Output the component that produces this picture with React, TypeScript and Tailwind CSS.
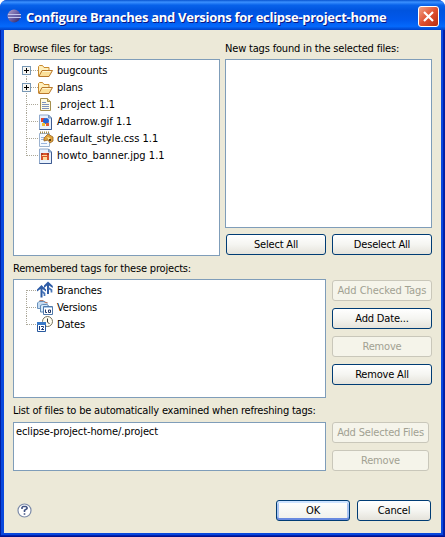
import type { ReactNode } from "react";

function Folder() {
  return (
    <svg width="16" height="16" viewBox="0 0 16 16">
      <path d="M1.500 13V3.500l1-1h3l1.500 2h5V8" fill="#fff0bd" stroke="#c98a2e" />
      <path d="M1.800 13.500l3.200-6h10.500l-3.500 6z" fill="#fbe09a" stroke="#b9782c" />
      <path d="M5.500 8.500h8.500" stroke="#fff6d2" />
    </svg>
  );
}

function TextFile() {
  return (
    <svg width="16" height="16" viewBox="0 0 16 16">
      <path d="M3.500 1.500h7l3 3v9h-10z" fill="#fffbe3" stroke="#a5904f" />
      <path d="M10.500 1.500v3h3" fill="#e3cf8d" stroke="#a5904f" />
      <path d="M5 5.500h4M5 7.500h7M5 9.500h7M5 11.500h7" stroke="#7d93bd" />
    </svg>
  );
}

function ImageFile({ photo }: { photo?: boolean }) {
  return (
    <svg width="16" height="16" viewBox="0 0 16 16">
      <path d="M2.500 1h9l3 3v11.500h-12z" fill="#e8f1fc" stroke="#8fa9cc" />
      <path d="M14.500 4v11.500h-12" fill="none" stroke="#3d5a91" />
      <path d="M11.500 1v3h3z" fill="#a9c0de" stroke="#7795bd" />
      {photo ? (
        <>
          <path d="M4 5h8v7H4z" fill="#d9542b" />
          <path d="M5 7h5v1H5zM6 9h4v3H6z" fill="#ffdc9b" />
          <path d="M4 5h2v2H4zM10 5h2v2h-2z" fill="#a83a25" />
        </>
      ) : (
        <>
          <path d="M4 4h4v4H4z" fill="#e0452e" />
          <circle cx="9" cy="7" r="3" fill="#2464d8" />
          <path d="M5 9h3v3H5z" fill="#f0bd32" />
          <path d="M9 9h3v3H9z" fill="#de5a3a" />
        </>
      )}
    </svg>
  );
}

function CssFile() {
  return (
    <svg width="17" height="16" viewBox="0 0 17 16">
      <path d="M2.500 2.500h10v13h-10z" fill="#f5faff" stroke="#9bb2cf" />
      <path d="M3 1.500h1M5 1.500h1M7 1.500h1M9 1.500h1M11 1.500h1" stroke="#a18c4b" strokeWidth="2" />
      <path d="M4 6.500h3M4 8.500h3M4 12.500h6" stroke="#9ab5df" />
      <path d="M7 7l4-4 5 3v4l-3 2-2-3-4 1z" fill="#dfa23a" stroke="#966323" strokeWidth=".8" />
      <path d="M10 6l3 1-1 2z" fill="#fff0a5" />
      <path d="M12 8h2v2h-2z" fill="#604015" />
    </svg>
  );
}

function Branches() {
  return (
    <svg width="16" height="16" viewBox="0 0 16 16" className="overflow-visible">
      <g fill="#2e5ca6">
        <path d="M4.500 2L9 6.500v2L5.500 6v8.500h-2V6L0 8.500v-2z" />
        <path d="M11 -1.500L15.800 3v2L12 2.500V11h-2V2.500L7 5V2.500z" />
      </g>
      <path d="M5 8.500l2.500 2V13M11.500 5l3 2v2.500" fill="none" stroke="#4775b8" strokeWidth="1.700" />
    </svg>
  );
}

function Versions() {
  return (
    <svg width="16" height="16" viewBox="0 0 16 16">
      <path d="M.5 8.500V3l1.500-1.500h6l2 2v5H.5z" fill="#c6dcf2" stroke="#6a91bb" />
      <path d="M2.500 .5h4M7.500 2.500h3" stroke="#bd806a" />
      <path d="M3.500 12V5.500l2-1h4l2 1V12z" fill="#d6eafa" stroke="#628ab5" />
      <path d="M6.500 6.500h9v8h-9z" fill="#fff" stroke="#4f79aa" />
      <path d="M7 7.500h8" stroke="#a9c9e9" />
      <path d="M8.500 9.500v3H10M11.500 10h2v2.500h-2z" fill="none" stroke="#243969" />
    </svg>
  );
}

function Dates() {
  return (
    <svg width="16" height="16" viewBox="0 0 16 16" className="overflow-visible">
      <circle cx="10.500" cy="4.500" r="5" fill="#fffdf0" stroke="#77735f" />
      <path d="M10.500 1.500v3.500l2 2" fill="none" stroke="#333" />
      <path d="M.5 5.500h8v9h-8z" fill="#fff" stroke="#28599e" />
      <path d="M0 6.500h9" stroke="#3979c8" strokeWidth="3" />
      <path d="M2.500 9v4M4 9.500h2.500v1l-2 2H7" fill="none" stroke="#173877" />
    </svg>
  );
}

function EclipseLogo() {
  return (
    <svg width="16" height="16" viewBox="0 0 16 16" className="-mt-[2px] shrink-0">
      <defs>
        <linearGradient id="orb" x2="1" y2="1">
          <stop stopColor="#b3a2c8" />
          <stop offset=".5" stopColor="#6a60a5" />
          <stop offset="1" stopColor="#29205f" />
        </linearGradient>
      </defs>
      <circle cx="7" cy="8" r="6.500" fill="url(#orb)" />
      <path d="M1 6.500h13M1 9.500h13" stroke="#c3c6ee" />
      <path d="M1 8h13" stroke="#6d68ad" />
    </svg>
  );
}

function Row({ icon, text, expandable, first, last, className = "" }: { icon: ReactNode; text: string; expandable?: boolean; first?: boolean; last?: boolean; className?: string }) {
  const top = first ? 8 : 0;
  return (
    <div className="flex h-[17px] items-center">
      <svg width="16" height="17" viewBox="0 0 16 17" className="shrink-0" shapeRendering="crispEdges">
        <path d={`M4.500 ${top}V${last ? 9 : 17}M5 8.500H16`} stroke="#aca899" strokeDasharray="1 1" />
        {expandable && (
          <>
            <rect x=".5" y="4.500" width="8" height="8" fill="#f7f6f2" stroke="#7898b5" />
            <path d="M2 8.500h5M4.500 6v5" stroke="#000" />
          </>
        )}
      </svg>
      <span className="-ml-px flex w-5 shrink-0">{icon}</span>
      <span className={className}>{text}</span>
    </div>
  );
}

function Button({ children, disabled, primary, className = "w-[100px]" }: { children: ReactNode; disabled?: boolean; primary?: boolean; className?: string }) {
  const look = disabled
    ? "border-[#c9c7ba] bg-[#f5f4ea] text-[#a1a192]"
    : primary
      ? "border-[#003c74] bg-linear-to-b from-white to-[#f0f0ea] shadow-[inset_0_-2px_#698ae0,inset_0_2px_#cee3ff,inset_2px_0_#a9c4f2,inset_-2px_0_#a9c4f2]"
      : "border-[#003c74] bg-linear-to-b from-white via-[#f5f5f1] to-[#e5e3db]";
  return (
    <button className={`flex h-[21px] shrink-0 items-center justify-center rounded-[3px] border pt-px ${look} ${className}`}>{children}</button>
  );
}

const box = "border border-[#7f9db9] bg-white";

export default function App() {
  return (
    <div className="flex h-[537px] w-[445px] flex-col overflow-hidden rounded-t-[7px] bg-[#0831d9] font-['DejaVu_Sans_Condensed','DejaVu_Sans',sans-serif] text-[11px] leading-[14px] tracking-[-0.18px] whitespace-nowrap text-black [font-stretch:condensed]">
      <header className="flex h-[30px] shrink-0 items-center bg-[linear-gradient(#0753cf_0%,#3b91ff_7%,#0862ea_17%,#0054df_35%,#0058ec_65%,#0469fc_88%,#0042c8_100%)] pt-[3px] pr-[6px] pl-[7px]">
        <EclipseLogo />
        <h1 className="ml-[3px] flex-1 font-['Open_Sans',sans-serif] text-[13px] font-bold tracking-[-0.28px] text-white [font-stretch:normal] [text-shadow:1px_1px_#0a1883]">
          Configure Branches and Versions for eclipse-project-home
        </h1>
        <button className="flex size-[21px] items-center justify-center rounded-[3px] border border-white bg-linear-to-br from-[#f0a084] via-[#df5030] to-[#b92c0b]">
          <svg width="13" height="13" viewBox="0 0 13 13"><path d="M2 2l9 9M11 2l-9 9" stroke="#fff" strokeWidth="2.200" /></svg>
        </button>
      </header>
      <div className="flex flex-1 border-x border-b border-x-[#001ea0] border-b-[#00138c] bg-[#0848dd] px-[3px] pb-[3px] shadow-[inset_-1px_-1px_#0020b0]">
        <main className="flex flex-1 flex-col bg-[#ece9d8] pl-[9px]">
          <section className="flex gap-[5px] pt-[11px]">
            <div>
              <div className="h-[18px] pt-px">Browse files for tags:</div>
              <div className={`h-[197px] w-[207px] pt-[2px] pl-[8px] ${box}`}>
                <Row icon={<Folder />} text="bugcounts" expandable first />
                <Row icon={<Folder />} text="plans" expandable />
                <Row icon={<TextFile />} text=".project 1.1" className="tracking-[0.15px]" />
                <Row icon={<ImageFile />} text="Adarrow.gif 1.1" className="tracking-[0.03px]" />
                <Row icon={<CssFile />} text="default_style.css 1.1" className="tracking-[0px]" />
                <Row icon={<ImageFile photo />} text="howto_banner.jpg 1.1" last className="tracking-[0.05px]" />
              </div>
            </div>
            <div>
              <div className="h-[18px] pt-px">New tags found in the selected files:</div>
              <div className={`h-[169px] w-[207px] ${box}`} />
              <div className="mt-[6px] flex gap-[6px] pl-px">
                <Button>Select All</Button>
                <Button>Deselect All</Button>
              </div>
            </div>
          </section>
          <div className="mt-[5px] h-[18px] pt-px">Remembered tags for these projects:</div>
          <section className="flex gap-[6px]">
            <div className={`h-[119px] w-[313px] pt-[2px] pl-[8px] ${box}`}>
              <Row icon={<Branches />} text="Branches" first />
              <Row icon={<Versions />} text="Versions" />
              <Row icon={<Dates />} text="Dates" last />
            </div>
            <div className="flex flex-col gap-[7px] pt-px">
              <Button disabled className="w-[100px] tracking-[-0.05px]">Add Checked Tags</Button>
              <Button>Add Date...</Button>
              <Button disabled>Remove</Button>
              <Button>Remove All</Button>
            </div>
          </section>
          <div className="mt-[5px] h-[19px] pt-px tracking-[-0.2px]">List of files to be automatically examined when refreshing tags:</div>
          <section className="flex gap-[6px]">
            <div className={`h-[49px] w-[313px] pt-[2px] pl-[2px] tracking-[-0.1px] ${box}`}>eclipse-project-home/.project</div>
            <div className="flex flex-col gap-[7px]">
              <Button disabled className="w-[97px]">Add Selected Files</Button>
              <Button disabled className="w-[97px]">Remove</Button>
            </div>
          </section>
          <footer className="mt-[29px] flex items-center gap-[7px] pr-[10px] pl-[4px]">
            <svg width="15" height="15" viewBox="0 0 15 15" className="mr-auto">
              <circle cx="7.500" cy="7.500" r="6.500" fill="#fff" stroke="#7c8ba9" strokeWidth="1.200" />
              <path d="M5 6V4.500L6 3.500h3l1 1v1L7.500 7.500v1.500M7.500 10.300v1.500" fill="none" stroke="#405383" strokeWidth="1.600" />
            </svg>
            <Button primary className="w-[74px]">OK</Button>
            <Button className="w-[74px]">Cancel</Button>
          </footer>
        </main>
      </div>
    </div>
  );
}
